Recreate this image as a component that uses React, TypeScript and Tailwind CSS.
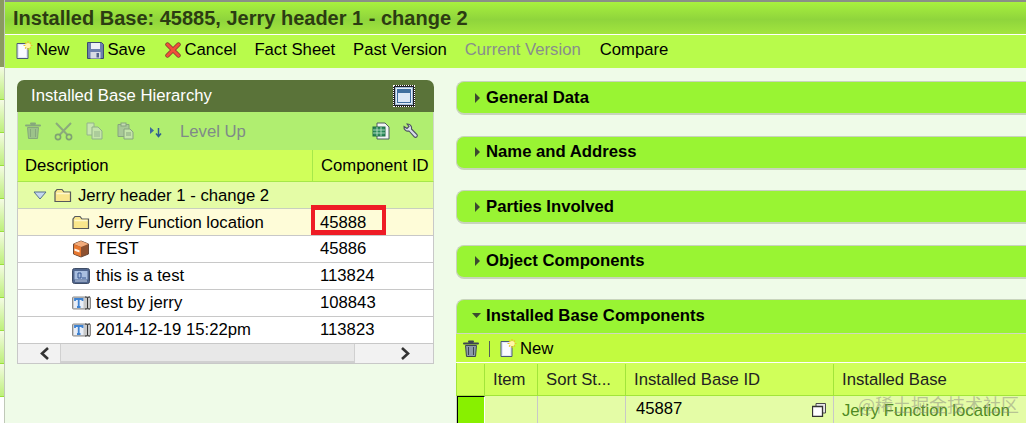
import React from "react";

const FolderIcon = () => (
  <svg width="18" height="15" viewBox="0 0 18 15" className="shrink-0">
    <path d="M1 13.500V4l2-2.500h5L10 4h6.500v9.500z" fill="#f9e68c" stroke="#55585c" strokeWidth="1.200" />
    <path d="M2.500 5.500h13" stroke="#fff8cc" strokeWidth="1.500" />
  </svg>
);

const BoxIcon = () => (
  <svg width="18" height="18" viewBox="0 0 18 18" className="shrink-0">
    <path d="M9 1l7.500 3v10L9 17l-7.500-3V4z" fill="#8f5230" stroke="#6a4a3a" />
    <path d="M9 1l7.500 3L9 7 1.500 4z" fill="#f2ab7a" />
    <path d="M2 4.500L9 7v9.500L2 14z" fill="#e8782f" />
    <path d="M2.500 8.500l5 1.800v2.200l-5-1.800z" fill="#fff2e6" />
  </svg>
);

const ScreenIcon = () => (
  <svg width="18" height="16" viewBox="0 0 18 16" className="shrink-0">
    <rect x="0.500" y="0.500" width="17" height="15" rx="2" fill="#51678f" stroke="#3f4d66" />
    <rect x="2.500" y="3" width="13" height="8.500" fill="#a9bfe0" />
    <path d="M6 10V5h3v5zM10 10h4" stroke="#34558f" fill="none" />
    <path d="M3 13h12" stroke="#c8d4e8" />
  </svg>
);

const TextIcon = () => (
  <svg width="20" height="14" viewBox="0 0 20 14" className="shrink-0">
    <rect x="0.500" y="1" width="18" height="12" rx="1" fill="#c9c9c9" stroke="#8a8a8a" />
    <rect x="2" y="2" width="9.500" height="10" fill="#e8eef8" />
    <path d="M3 5V3h7.500v2M6.700 3v8M5 11h3.500" stroke="#3f82d0" strokeWidth="1.800" fill="none" />
    <path d="M13 1h1.500l1 1 1-1H18M15.500 2v10M13 13h1.500l1-1 1 1H18" stroke="#333" fill="none" />
  </svg>
);

const NewIcon = () => (
  <svg width="17" height="19" viewBox="0 0 17 19" className="shrink-0">
    <path d="M1 2.500h11v15H1z" fill="#e4e8f6" stroke="#4a5a78" />
    <path d="M3 4h7v12H3z" fill="#fbfcff" />
    <path d="M12 0v9M7.500 4.500h9M9 1.500l6 6M15 1.500l-6 6" stroke="#e8c42a" strokeWidth="1.200" />
    <circle cx="12" cy="4.500" r="2.600" fill="#fff6a8" />
  </svg>
);

const SaveIcon = () => (
  <svg width="17" height="17" viewBox="0 0 17 17" className="shrink-0">
    <path d="M.500.500h14l2 2v14H.500z" fill="#6d7fae" stroke="#3d4a70" />
    <rect x="4" y="1" width="9" height="6" fill="#eef0f6" />
    <rect x="3.500" y="10" width="10" height="6.500" fill="#d8dbe4" />
    <rect x="9.500" y="11" width="2.500" height="4.500" fill="#54638c" />
  </svg>
);

const CancelIcon = () => (
  <svg width="16" height="16" viewBox="0 0 16 16" className="shrink-0">
    <path d="M2.500 2.500l11 11M13.500 2.500l-11 11" stroke="#7d3a30" strokeWidth="4.400" strokeLinecap="round" />
    <path d="M2.500 2.500l11 11M13.500 2.500l-11 11" stroke="#f0503a" strokeWidth="3" strokeLinecap="round" />
  </svg>
);

const TrashIcon = ({ color, dark }: { color: string; dark: string }) => (
  <svg width="16" height="18" viewBox="0 0 16 18" className="shrink-0">
    <path d="M6 1.500h4M1 3.500h14" stroke={dark} strokeWidth="2" strokeLinecap="round" />
    <path d="M2.500 5.500h11l-1 11h-9z" fill={color} stroke={dark} />
    <path d="M5.500 7v8M10.500 7v8" stroke={dark} strokeWidth="1" />
  </svg>
);

const ScissorsIcon = () => (
  <svg width="19" height="19" viewBox="0 0 19 19" className="shrink-0">
    <path d="M2 1l11.500 12M17 1L5.500 13" stroke="#8bab7c" strokeWidth="2" />
    <circle cx="4" cy="15" r="2.600" fill="none" stroke="#7fa273" strokeWidth="1.600" />
    <circle cx="15" cy="15" r="2.600" fill="none" stroke="#7fa273" strokeWidth="1.600" />
  </svg>
);

const CopyIcon = () => (
  <svg width="17" height="18" viewBox="0 0 17 18" className="shrink-0">
    <path d="M1 1h7v12H1z" fill="#c8e6b0" stroke="#94b48c" />
    <path d="M6 5h6l4 4v8H6z" fill="#c4e4aa" stroke="#8fb088" />
    <path d="M8 10h6M8 12h6M8 14h6" stroke="#94b48c" />
  </svg>
);

const PasteIcon = () => (
  <svg width="17" height="18" viewBox="0 0 17 18" className="shrink-0">
    <path d="M1 2.500h11v12H1z" fill="#a8c898" stroke="#86a47e" />
    <rect x="4" y="1" width="5" height="3" fill="#c4dcb0" stroke="#86a47e" />
    <path d="M7 7h6l3 3v7H7z" fill="#c4e4aa" stroke="#86a47e" />
    <path d="M9 11h5M9 13h5" stroke="#86a47e" />
  </svg>
);

const SortIcon = () => (
  <svg width="13" height="13" viewBox="0 0 13 13" className="shrink-0">
    <path d="M1 2l4 3.500L1 9z" fill="#3f6a9c" />
    <path d="M9.500 3v8M7 8.500l2.500 3 2.500-3" stroke="#2f5d90" strokeWidth="1.500" fill="none" />
  </svg>
);

const SheetIcon = () => (
  <svg width="18" height="18" viewBox="0 0 18 18" className="shrink-0">
    <path d="M5 1h8l4 4v12H5z" fill="#f2f4f4" stroke="#4e5c60" />
    <rect x="1" y="5" width="12" height="9" fill="#2b8a5a" stroke="#1f6a45" />
    <path d="M1 8h12M1 11h12M5 5v9M9 5v9" stroke="#c7e8d0" strokeWidth="0.800" />
  </svg>
);

const WrenchIcon = () => (
  <svg width="16" height="17" viewBox="0 0 16 17" className="shrink-0">
    <path d="M1 3.500a4 4 0 0 0 5 4.500l5.500 6a1.800 1.800 0 0 0 2.500-2.500L8.500 6a4 4 0 0 0-4.500-5L6 3.500 4 5.500z" fill="#d8dcea" stroke="#4a4f60" strokeWidth="1.100" />
  </svg>
);

const WindowIcon = () => (
  <svg width="18" height="18" viewBox="0 0 18 18">
    <rect x="0.500" y="0.500" width="17" height="17" fill="#e3ecf6" stroke="#9db8d6" />
    <rect x="2" y="2" width="14" height="14" fill="#3f6f9f" />
    <rect x="3" y="6" width="12" height="9" fill="#dbe8f6" />
  </svg>
);

const CopyMini = () => (
  <svg width="14" height="14" viewBox="0 0 14 14" className="shrink-0">
    <path d="M4 .500h9.500v9.500H4z" fill="#e8e8e8" stroke="#4a4a4a" />
    <path d="M.500 3.500h10v10h-10z" fill="#fff" stroke="#333" strokeWidth="1.300" />
  </svg>
);

const treeRows = [
  { icon: <FolderIcon />, name: "Jerry Function location", id: "45888", selected: true },
  { icon: <BoxIcon />, name: "TEST", id: "45886" },
  { icon: <ScreenIcon />, name: "this is a test", id: "113824" },
  { icon: <TextIcon />, name: "test by jerry", id: "108843" },
  { icon: <TextIcon />, name: "2014-12-19 15:22pm", id: "113823" },
];

const Section = ({ title }: { title: string }) => (
  <div className="flex h-[34px] items-center rounded-l-[8px] border-t border-b-2 border-l border-[#c8d4bc] bg-[#99f433] pl-[16px] text-[16.7px] font-bold text-black">
    <svg width="8" height="10" viewBox="0 0 8 10" className="mr-[5px] shrink-0">
      <path d="M2 0l5 5-5 5z" fill="#3c4a30" />
    </svg>
    {title}
  </div>
);

export default function App() {
  return (
    <div className="relative flex h-[423px] w-[1026px] flex-col overflow-hidden bg-[#effbe8] font-['Liberation_Sans',Arial,sans-serif] text-black">
      <div className="h-[2px] shrink-0 bg-[#8a8f86]" />
      <div className="flex h-[32px] shrink-0 items-center bg-[linear-gradient(#a8f03e,#8fd53c_55%,#a2e53e)] pl-[13px] text-[20px] font-bold text-[#2c3c12]">
        Installed Base: 45885, Jerry header 1 - change 2
      </div>
      <div className="h-px shrink-0 bg-white" />
      <div className="flex h-[33px] shrink-0 items-center bg-[#b8fb4b] pb-[3px] pl-[16px] text-[16.7px] leading-none">
        <span className="flex items-center gap-[3px]"><NewIcon />New</span>
        <span className="ml-[18px] flex items-center gap-[3px]"><SaveIcon />Save</span>
        <span className="ml-[20px] flex items-center gap-[3px]"><CancelIcon />Cancel</span>
        <span className="ml-[18px]">Fact Sheet</span>
        <span className="ml-[18px]">Past Version</span>
        <span className="ml-[18px] text-[#888e8c]">Current Version</span>
        <span className="ml-[19px]">Compare</span>
      </div>

      <div className="flex min-h-0 flex-1 items-start pt-[12px] pl-[17px]">
        {/* hierarchy panel */}
        <div className="w-[417px] shrink-0">
          <div className="flex h-[32px] items-center justify-between rounded-t-[7px] bg-[#5a7339] pr-[19px] pl-[14px] text-[16.7px] text-white">
            <span>Installed Base Hierarchy</span>
            <span className="flex h-[22px] w-[22px] items-center justify-center border border-dotted border-white bg-[#222]">
              <WindowIcon />
            </span>
          </div>
          <div className="flex h-[38px] items-center border-x border-[#d0d8c8] bg-[#b0ee70] pr-[14px] pl-[7px]">
            <TrashIcon color="#9cc28a" dark="#86a87c" />
            <span className="ml-[13px]"><ScissorsIcon /></span>
            <span className="ml-[13px]"><CopyIcon /></span>
            <span className="ml-[14px]"><PasteIcon /></span>
            <span className="ml-[15px]"><SortIcon /></span>
            <span className="ml-[18px] pt-px text-[16.7px] text-[#7f8a88]">Level Up</span>
            <span className="ml-auto"><SheetIcon /></span>
            <span className="ml-[13px]"><WrenchIcon /></span>
          </div>
          <div className="flex h-[32px] items-stretch border-x border-b border-[#c8d4bc] border-b-[#a6e84a] bg-[#d0ff5a] text-[16.7px]">
            <div className="flex w-[295px] items-center border-r border-[#a6e84a] pl-[7px]">Description</div>
            <div className="flex flex-1 items-center pl-[8px]">Component ID</div>
          </div>
          <div className="flex h-[27px] items-center border-x border-b border-[#c8cfc0] bg-[#e4fca6] pt-px pl-[15px] text-[16.7px]">
            <svg width="14" height="9" viewBox="0 0 14 9" className="mr-[7px] shrink-0">
              <path d="M1 1h12L7 8z" fill="#c4d8f0" stroke="#55708c" />
            </svg>
            <FolderIcon />
            <span className="ml-[6px]">Jerry header 1 - change 2</span>
          </div>
          {treeRows.map((row) => (
            <div
              key={row.id}
              className={`flex h-[27px] items-center border-x border-b border-[#c8c8c8] text-[16.7px] ${row.selected ? "bg-[#fefcd8] pt-px" : "bg-white"}`}
            >
              <div className="flex w-[295px] items-center pl-[54px]">
                <span className="flex w-[24px] shrink-0 items-center">{row.icon}</span>
                <span>{row.name}</span>
              </div>
              <div className="pl-[7px]">{row.id}</div>
            </div>
          ))}
          <div className="flex h-[20px] items-stretch border-x border-b border-[#c8c8c8] bg-[#f2f2f2]">
            <div className="flex w-[42px] items-center pl-[21px]">
              <svg width="11" height="13" viewBox="0 0 11 13"><path d="M9 1L3 6.500 9 12" stroke="#333" strokeWidth="2.600" fill="none" /></svg>
            </div>
            <div className="w-[295px] border-x border-b-2 border-[#d0d0d0] bg-[#e8e8e8]" />
            <div className="flex flex-1 items-center pl-[45px]">
              <svg width="11" height="13" viewBox="0 0 11 13"><path d="M2 1l6 5.500L2 12" stroke="#333" strokeWidth="2.600" fill="none" /></svg>
            </div>
          </div>
        </div>

        {/* assignment blocks */}
        <div className="mt-px ml-[22px] flex min-w-0 flex-1 flex-col gap-[20.500px]">
          <Section title="General Data" />
          <Section title="Name and Address" />
          <Section title="Parties Involved" />
          <Section title="Object Components" />
          <div>
            <div className="flex h-[34px] items-center rounded-tl-[8px] border-t border-l border-[#c8d4bc] bg-[#99f433] pb-[2px] pl-[15px] text-[16.7px] font-bold">
              <svg width="10" height="7" viewBox="0 0 10 7" className="mr-[4px] shrink-0"><path d="M0 1h9L4.500 6z" fill="#3c4a30" /></svg>
              Installed Base Components
            </div>
            <div className="flex h-[30px] items-center border-t border-b border-[#cfd8c0] border-b-white bg-[#c2fb3f] pt-px pl-[7px] text-[16.7px]">
              <TrashIcon color="#8b9aa8" dark="#3d4650" />
              <span className="mr-[10px] ml-[10px] h-[16px] w-px bg-[#55605a]" />
              <NewIcon />
              <span className="ml-[3px]">New</span>
            </div>
            <div className="flex h-[33px] items-stretch border-l border-b border-[#a2e53a] bg-[#d0ff5a] pt-px text-[16.7px] text-[#222]">
              <div className="w-[28px] border-r border-[#a2e53a]" />
              <div className="flex w-[53px] items-center border-r border-[#a2e53a] pl-[8px]">Item</div>
              <div className="flex w-[88px] items-center border-r border-[#a2e53a] pl-[8px]">Sort St...</div>
              <div className="flex w-[208px] items-center border-r border-[#a2e53a] pl-[8px]">Installed Base ID</div>
              <div className="flex flex-1 items-center pl-[8px]">Installed Base</div>
            </div>
            <div className="flex h-[30px] items-stretch border-l border-[#c8d4bc] bg-[#e4fca6] text-[16.7px]">
              <div className="w-[28px] border-t border-r border-l border-black border-r-white bg-[#88f000]" />
              <div className="w-[53px] border-r border-[#c8c8c8]" />
              <div className="w-[88px] border-r border-[#c8c8c8]" />
              <div className="flex w-[208px] items-start justify-between border-r border-[#c8c8c8] pr-[7px] pl-[10px]">
                45887
                <span className="mt-[7px]"><CopyMini /></span>
              </div>
              <div className="flex-1 pt-[2px] pl-[8px] text-[#4f8a22]">Jerry Function location</div>
            </div>
          </div>
        </div>
      </div>

      {/* left edge of the neighbouring nav */}
      <div className="absolute top-0 left-0 flex h-[423px] w-[5px] flex-col border-r border-[#c0c8b8] bg-white">
        <div className="h-[67px] shrink-0 bg-[#8a9a60]" />
        {[0, 1, 2, 3, 4, 5, 6, 7, 8, 9].map((i) => (
          <div key={i} className="h-[33px] shrink-0 border-b border-[#9ae03c] bg-[linear-gradient(#f4fbe4,#bdf07a)]" />
        ))}
      </div>

      {/* red marker drawn over the grid */}
      <div className="absolute top-[205px] left-[311px] h-[30px] w-[75px] border-x-[4px] border-y-[5px] border-[#ee1c25]" />

      {/* watermark */}
      <div className="absolute top-[391px] left-[858px] font-['Noto_Sans_CJK_SC',sans-serif] text-[18px] text-[#8a8a80]/50">
        @稀土掘金技术社区
      </div>
    </div>
  );
}
